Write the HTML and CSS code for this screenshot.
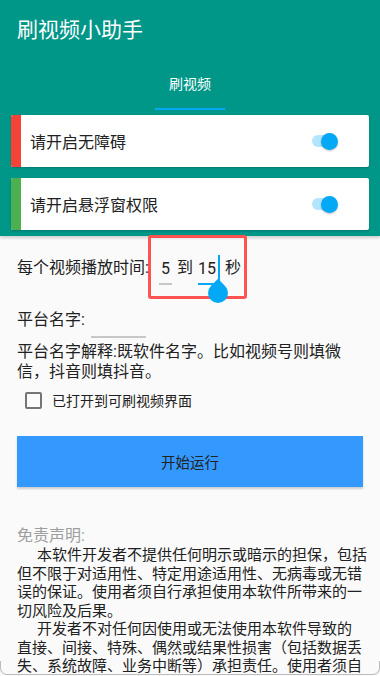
FILE: index.html
```html
<!DOCTYPE html>
<html lang="zh-CN">
<head>
<meta charset="utf-8">
<title>刷视频小助手</title>
<link rel="stylesheet" href="styles.css">
</head>
<body>
<div class="page">
  <header class="appbar">
    <div class="toolbar">刷视频小助手</div>
    <nav class="tabs">
      <div class="tab active">刷视频</div>
    </nav>
    <div class="card">
      <span class="bar bar-red"></span>
      <span class="card-text">请开启无障碍</span>
      <span class="switch"><span class="track"></span><span class="thumb"></span></span>
    </div>
    <div class="card">
      <span class="bar bar-green"></span>
      <span class="card-text">请开启悬浮窗权限</span>
      <span class="switch"><span class="track"></span><span class="thumb"></span></span>
    </div>
  </header>

  <main class="content">
    <div class="time-row">
      <span>每个视频播放时间:</span>
      <span class="field field-min">5</span>
      <span class="to">到</span>
      <span class="field field-max">15<span class="cursor"></span><span class="handle"></span></span>
      <span class="sec">秒</span>
      <span class="highlight"></span>
    </div>

    <div class="platform-row">
      <span>平台名字:</span>
      <span class="field field-name"></span>
    </div>

    <p class="explain">平台名字解释:既软件名字。比如视频号则填微信，抖音则填抖音。</p>

    <label class="check-row">
      <span class="checkbox"></span>
      <span class="check-text">已打开到可刷视频界面</span>
    </label>

    <button class="run-btn">开始运行</button>

    <h2 class="disclaimer-title">免责声明:</h2>
    <p class="para">本软件开发者不提供任何明示或暗示的担保，包括<br>但不限于对适用性、特定用途适用性、无病毒或无错<br>误的保证。使用者须自行承担使用本软件所带来的一<br>切风险及后果。</p>
    <p class="para">开发者不对任何因使用或无法使用本软件导致的<br>直接、间接、特殊、偶然或结果性损害（包括数据丢<br>失、系统故障、业务中断等）承担责任。使用者须自<br>行承担因使用本软件而可能产生的任何法律责任。</p>
  </main>
  <div class="frame-edge"></div>
</div>
</body>
</html>
```

FILE: styles.css
```css
* { box-sizing: border-box; }
html, body {
  margin: 0;
  padding: 0;
  width: 380px;
  height: 676px;
  overflow: hidden;
}
body {
  font-family: "Roboto", "Noto Sans CJK SC", sans-serif;
  background: #fafafa;
  color: #212121;
}
.page {
  position: relative;
  height: 676px;
  overflow: hidden;
}
.appbar {
  background: #009688;
  padding-bottom: 6px;
  box-shadow: 0 2px 3px rgba(0, 0, 0, 0.18);
  position: relative;
  z-index: 1;
}
.toolbar {
  height: 56px;
  line-height: 56px;
  padding: 2px 0 0 17px;
  font-size: 21px;
  color: #fff;
}
.tabs {
  height: 54px;
  display: flex;
  justify-content: center;
}
.tab {
  width: 70px;
  display: flex;
  align-items: center;
  justify-content: center;
  font-size: 14px;
  color: #fff;
  border-bottom: 2px solid transparent;
  padding-top: 2px;
}
.tab.active { border-bottom-color: #03a9f4; }
.card {
  margin: 5px 11px 0;
  height: 52px;
  background: #fff;
  border-radius: 2px;
  box-shadow: 0 1px 2px rgba(0, 0, 0, 0.2);
  display: flex;
  align-items: center;
  overflow: hidden;
}
.card + .card { margin-top: 11px; }
.bar {
  width: 10px;
  align-self: stretch;
}
.bar-red { background: #f44336; }
.bar-green { background: #4caf50; }
.card-text {
  flex: 1;
  padding-left: 9px;
  font-size: 16px;
  color: #212121;
}
.switch {
  position: relative;
  width: 26px;
  height: 17px;
  margin-right: 31px;
  display: flex;
  align-items: center;
}
.track {
  width: 22px;
  height: 12px;
  border-radius: 6px;
  background: #b3e5fc;
}
.thumb {
  position: absolute;
  right: 0;
  top: 0;
  width: 17px;
  height: 17px;
  border-radius: 50%;
  background: #03a9f4;
  box-shadow: 0 1px 2px rgba(0, 0, 0, 0.25);
}
.content {
  padding: 0 17px;
}
.time-row {
  position: relative;
  margin-top: 12px;
  height: 40px;
  display: flex;
  align-items: center;
  font-size: 16px;
  line-height: 20px;
}
.field {
  display: inline-block;
  text-align: left;
  line-height: 20px;
  position: relative;
}
.field-min {
  width: 13px;
  margin-left: 10px;
  padding-left: 2px;
  border-bottom: 2px solid #c7c7c7;
  margin-top: 8px;
  padding-bottom: 4px;
}
.to { margin-left: 5px; }
.field-max {
  width: 24px;
  margin-left: 5px;
  border-bottom: 2px solid #03a9f4;
  margin-top: 8px;
  padding-bottom: 4px;
}
.sec { margin-left: 3px; }
.cursor {
  position: absolute;
  left: 20px;
  top: -4px;
  width: 2px;
  height: 30px;
  background: #03a9f4;
}
.handle {
  position: absolute;
  left: 10px;
  top: 24px;
  width: 20px;
  height: 20px;
  background: #03a9f4;
  border-radius: 0 50% 50% 50%;
  transform: rotate(45deg);
  z-index: 3;
}
.highlight {
  position: absolute;
  left: 131px;
  top: -13px;
  width: 99px;
  height: 64px;
  border: 3px solid #ff5252;
  border-radius: 3px;
  z-index: 2;
}
.platform-row {
  margin-top: 10px;
  height: 40px;
  display: flex;
  align-items: center;
  font-size: 16px;
}
.field-name {
  width: 55px;
  height: 20px;
  margin-left: 6px;
  margin-top: 20px;
  border-bottom: 2px solid #c7c7c7;
}
.explain {
  margin: 4px 0 0;
  font-size: 16px;
  line-height: 20px;
  color: #212121;
}
.check-row {
  margin-top: 6px;
  height: 24px;
  display: flex;
  align-items: center;
  padding-left: 8px;
}
.checkbox {
  width: 17px;
  height: 17px;
  border: 2px solid #757575;
  border-radius: 2px;
}
.check-text {
  margin-left: 10px;
  font-size: 14px;
  color: #212121;
}
.run-btn {
  display: block;
  width: 100%;
  margin-top: 24px;
  height: 51px;
  border: 0;
  border-radius: 0;
  background: #3399ff;
  color: #222;
  font-family: inherit;
  font-size: 14.5px;
  box-shadow: 0 2px 2px rgba(0, 0, 0, 0.18);
}
.disclaimer-title {
  margin: 39px 0 0;
  font-size: 16px;
  line-height: 20px;
  font-weight: normal;
  color: #9e9e9e;
}
.para {
  margin: 0;
  font-size: 15px;
  line-height: 18.5px;
  text-indent: 20px;
  white-space: nowrap;
  color: #212121;
}
.frame-edge {
  position: absolute;
  left: 0;
  right: 0;
  bottom: 1px;
  height: 14px;
  border: 1.5px solid #bdbdbd;
  border-top: 0;
  border-radius: 0 0 7px 7px;
  pointer-events: none;
}
```
